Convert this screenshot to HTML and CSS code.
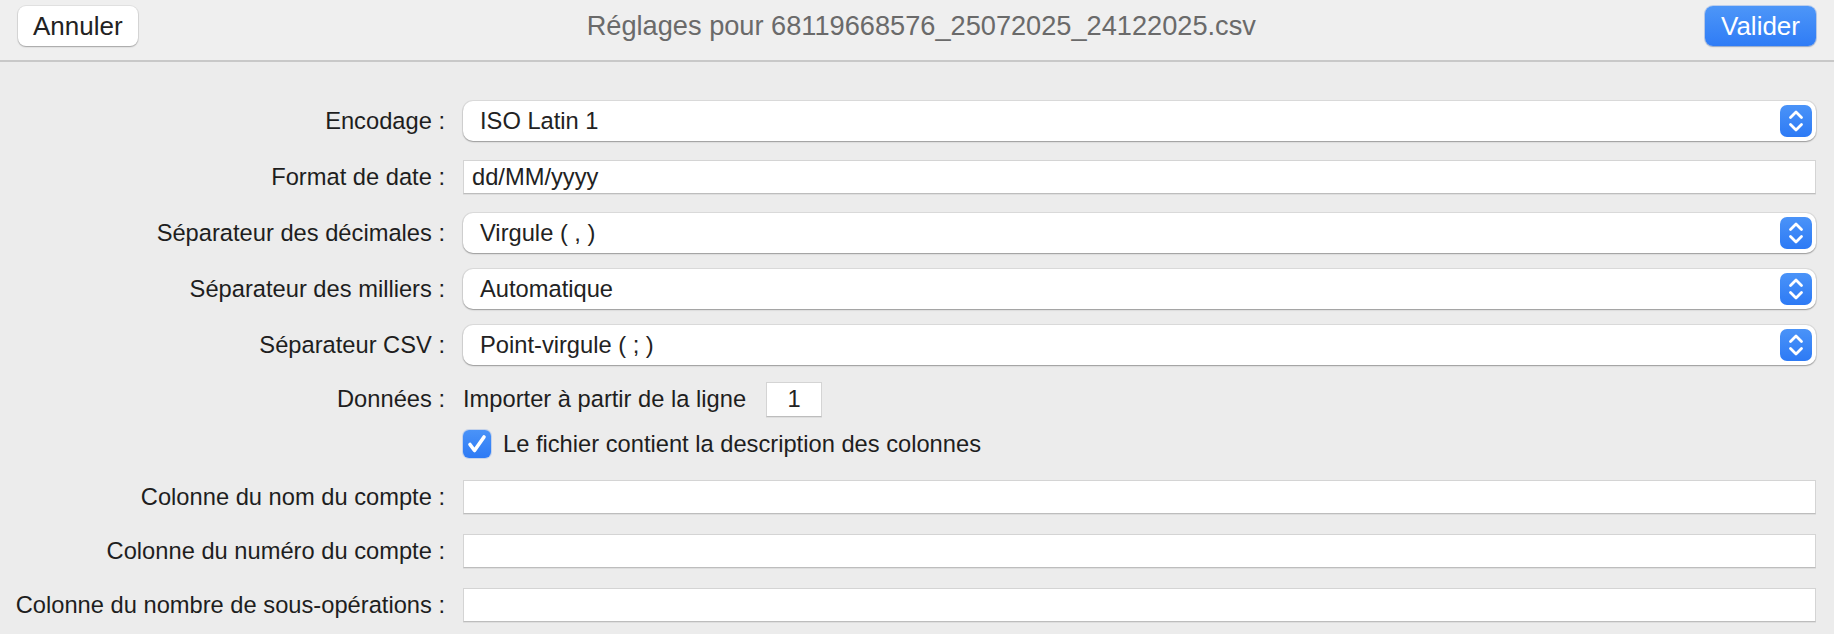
FILE: index.html
```html
<!DOCTYPE html>
<html lang="fr">
<head>
<meta charset="utf-8">
<title>Réglages</title>
<link rel="stylesheet" href="styles.css">
</head>
<body>
<div class="window">
  <header class="toolbar">
    <button class="btn">Annuler</button>
    <h1 class="title">Réglages pour 68119668576_25072025_24122025.csv</h1>
    <button class="btn btn-primary">Valider</button>
  </header>
  <main class="form">
    <div class="row">
      <span class="label">Encodage :</span>
      <div class="popup"><span class="popup-text">ISO Latin 1</span><span class="stepper"><svg viewBox="0 0 32 32" width="32" height="32"><polyline points="10.5,12.5 16,7 21.5,12.5"/><polyline points="10.5,19.5 16,25 21.5,19.5"/></svg></span></div>
    </div>
    <div class="row">
      <span class="label">Format de date :</span>
      <div class="field">dd/MM/yyyy</div>
    </div>
    <div class="row">
      <span class="label">Séparateur des décimales :</span>
      <div class="popup"><span class="popup-text">Virgule ( , )</span><span class="stepper"><svg viewBox="0 0 32 32" width="32" height="32"><polyline points="10.5,12.5 16,7 21.5,12.5"/><polyline points="10.5,19.5 16,25 21.5,19.5"/></svg></span></div>
    </div>
    <div class="row">
      <span class="label">Séparateur des milliers :</span>
      <div class="popup"><span class="popup-text">Automatique</span><span class="stepper"><svg viewBox="0 0 32 32" width="32" height="32"><polyline points="10.5,12.5 16,7 21.5,12.5"/><polyline points="10.5,19.5 16,25 21.5,19.5"/></svg></span></div>
    </div>
    <div class="row">
      <span class="label">Séparateur CSV :</span>
      <div class="popup"><span class="popup-text">Point-virgule ( ; )</span><span class="stepper"><svg viewBox="0 0 32 32" width="32" height="32"><polyline points="10.5,12.5 16,7 21.5,12.5"/><polyline points="10.5,19.5 16,25 21.5,19.5"/></svg></span></div>
    </div>
    <div class="row row-data">
      <span class="label">Données :</span>
      <div class="inline">
        <span class="text">Importer à partir de la ligne</span>
        <div class="field field-number">1</div>
      </div>
    </div>
    <div class="row row-check">
      <span class="label"></span>
      <div class="inline check-line">
        <span class="checkbox"><svg viewBox="0 0 28 28" width="28" height="28"><polyline points="7,14.5 11.5,20.5 21,7"/></svg></span>
        <span class="text">Le fichier contient la description des colonnes</span>
      </div>
    </div>
    <div class="row row-short">
      <span class="label">Colonne du nom du compte :</span>
      <div class="field"></div>
    </div>
    <div class="row row-short">
      <span class="label">Colonne du numéro du compte :</span>
      <div class="field"></div>
    </div>
    <div class="row row-short">
      <span class="label">Colonne du nombre de sous-opérations :</span>
      <div class="field"></div>
    </div>
  </main>
</div>
</body>
</html>
```

FILE: styles.css
```css
html, body {
  margin: 0;
  padding: 0;
  background: #ececec;
  overflow: hidden;
}

body {
  font-family: "Liberation Sans", Arial, sans-serif;
  color: #222;
}

.window {
  width: 1834px;
  height: 634px;
}

.toolbar {
  height: 62px;
  box-sizing: border-box;
  display: flex;
  align-items: flex-start;
  padding: 6px 18px 0 18px;
  background: #efefef;
  border-bottom: 2px solid #c8c8c8;
}

.btn {
  height: 40px;
  padding: 0 15px;
  border: none;
  border-radius: 8px;
  background: #ffffff;
  color: #222;
  font-family: "Liberation Sans", Arial, sans-serif;
  font-size: 26px;
  line-height: 40px;
  box-shadow: 0 0 0 1px rgba(0, 0, 0, 0.06), 0 1px 1.5px rgba(0, 0, 0, 0.28);
}

.btn-primary {
  background: linear-gradient(#4d96f8, #2f7cf6);
  color: #fff;
  padding: 0 16px;
  box-shadow: 0 0 0 1px rgba(40, 110, 230, 0.25), 0 1px 1.5px rgba(0, 0, 0, 0.22);
}

.title {
  flex: 1;
  margin: 0;
  text-align: center;
  font-weight: normal;
  font-size: 27.2px;
  line-height: 40px;
  color: #6a6a6a;
}

.form {
  display: flex;
  flex-direction: column;
  padding: 31px 18px 0 0;
}

.row {
  display: grid;
  grid-template-columns: 445px 1fr;
  column-gap: 18px;
  align-items: center;
  height: 56px;
}

.row-data {
  height: 52px;
}

.row-short {
  height: 54px;
}

.row-check {
  height: 45px;
  box-sizing: border-box;
  align-items: start;
  padding-top: 5px;
}

.label {
  text-align: right;
  font-size: 23.7px;
  color: #1e1e1e;
  white-space: nowrap;
}

.text {
  font-size: 23.7px;
  color: #1e1e1e;
  white-space: nowrap;
}

.popup {
  height: 40px;
  display: flex;
  align-items: center;
  justify-content: space-between;
  background: #fff;
  border-radius: 10px;
  padding: 0 4px 0 17px;
  box-shadow: 0 0 0 1px rgba(0, 0, 0, 0.07), 0 1px 1.5px rgba(0, 0, 0, 0.3);
}

.popup-text {
  font-size: 23.7px;
  color: #222;
}

.stepper {
  width: 32px;
  height: 32px;
  border-radius: 7px;
  background: linear-gradient(#4a93f8, #2d7af5);
  display: flex;
}

.stepper svg polyline {
  fill: none;
  stroke: #fff;
  stroke-width: 2.8;
  stroke-linecap: round;
  stroke-linejoin: round;
}

.field {
  height: 34px;
  box-sizing: border-box;
  background: #fff;
  border: 1px solid #d4d4d4;
  border-bottom-color: #bdbdbd;
  box-shadow: 0 1px 0 rgba(0, 0, 0, 0.06);
  padding: 0 8px;
  font-size: 23.7px;
  line-height: 32px;
  color: #222;
}

.inline {
  display: flex;
  align-items: center;
  gap: 20px;
}

.field-number {
  width: 56px;
  height: 35px;
  line-height: 33px;
  text-align: center;
  padding: 0;
}

.check-line {
  gap: 12px;
}

.checkbox {
  width: 28px;
  height: 28px;
  border-radius: 6px;
  background: linear-gradient(#4a93f8, #2d7af5);
  display: flex;
  box-shadow: 0 0 0 1px rgba(40, 110, 230, 0.2);
}

.checkbox svg polyline {
  fill: none;
  stroke: #fff;
  stroke-width: 3.6;
  stroke-linecap: round;
  stroke-linejoin: round;
}
```
